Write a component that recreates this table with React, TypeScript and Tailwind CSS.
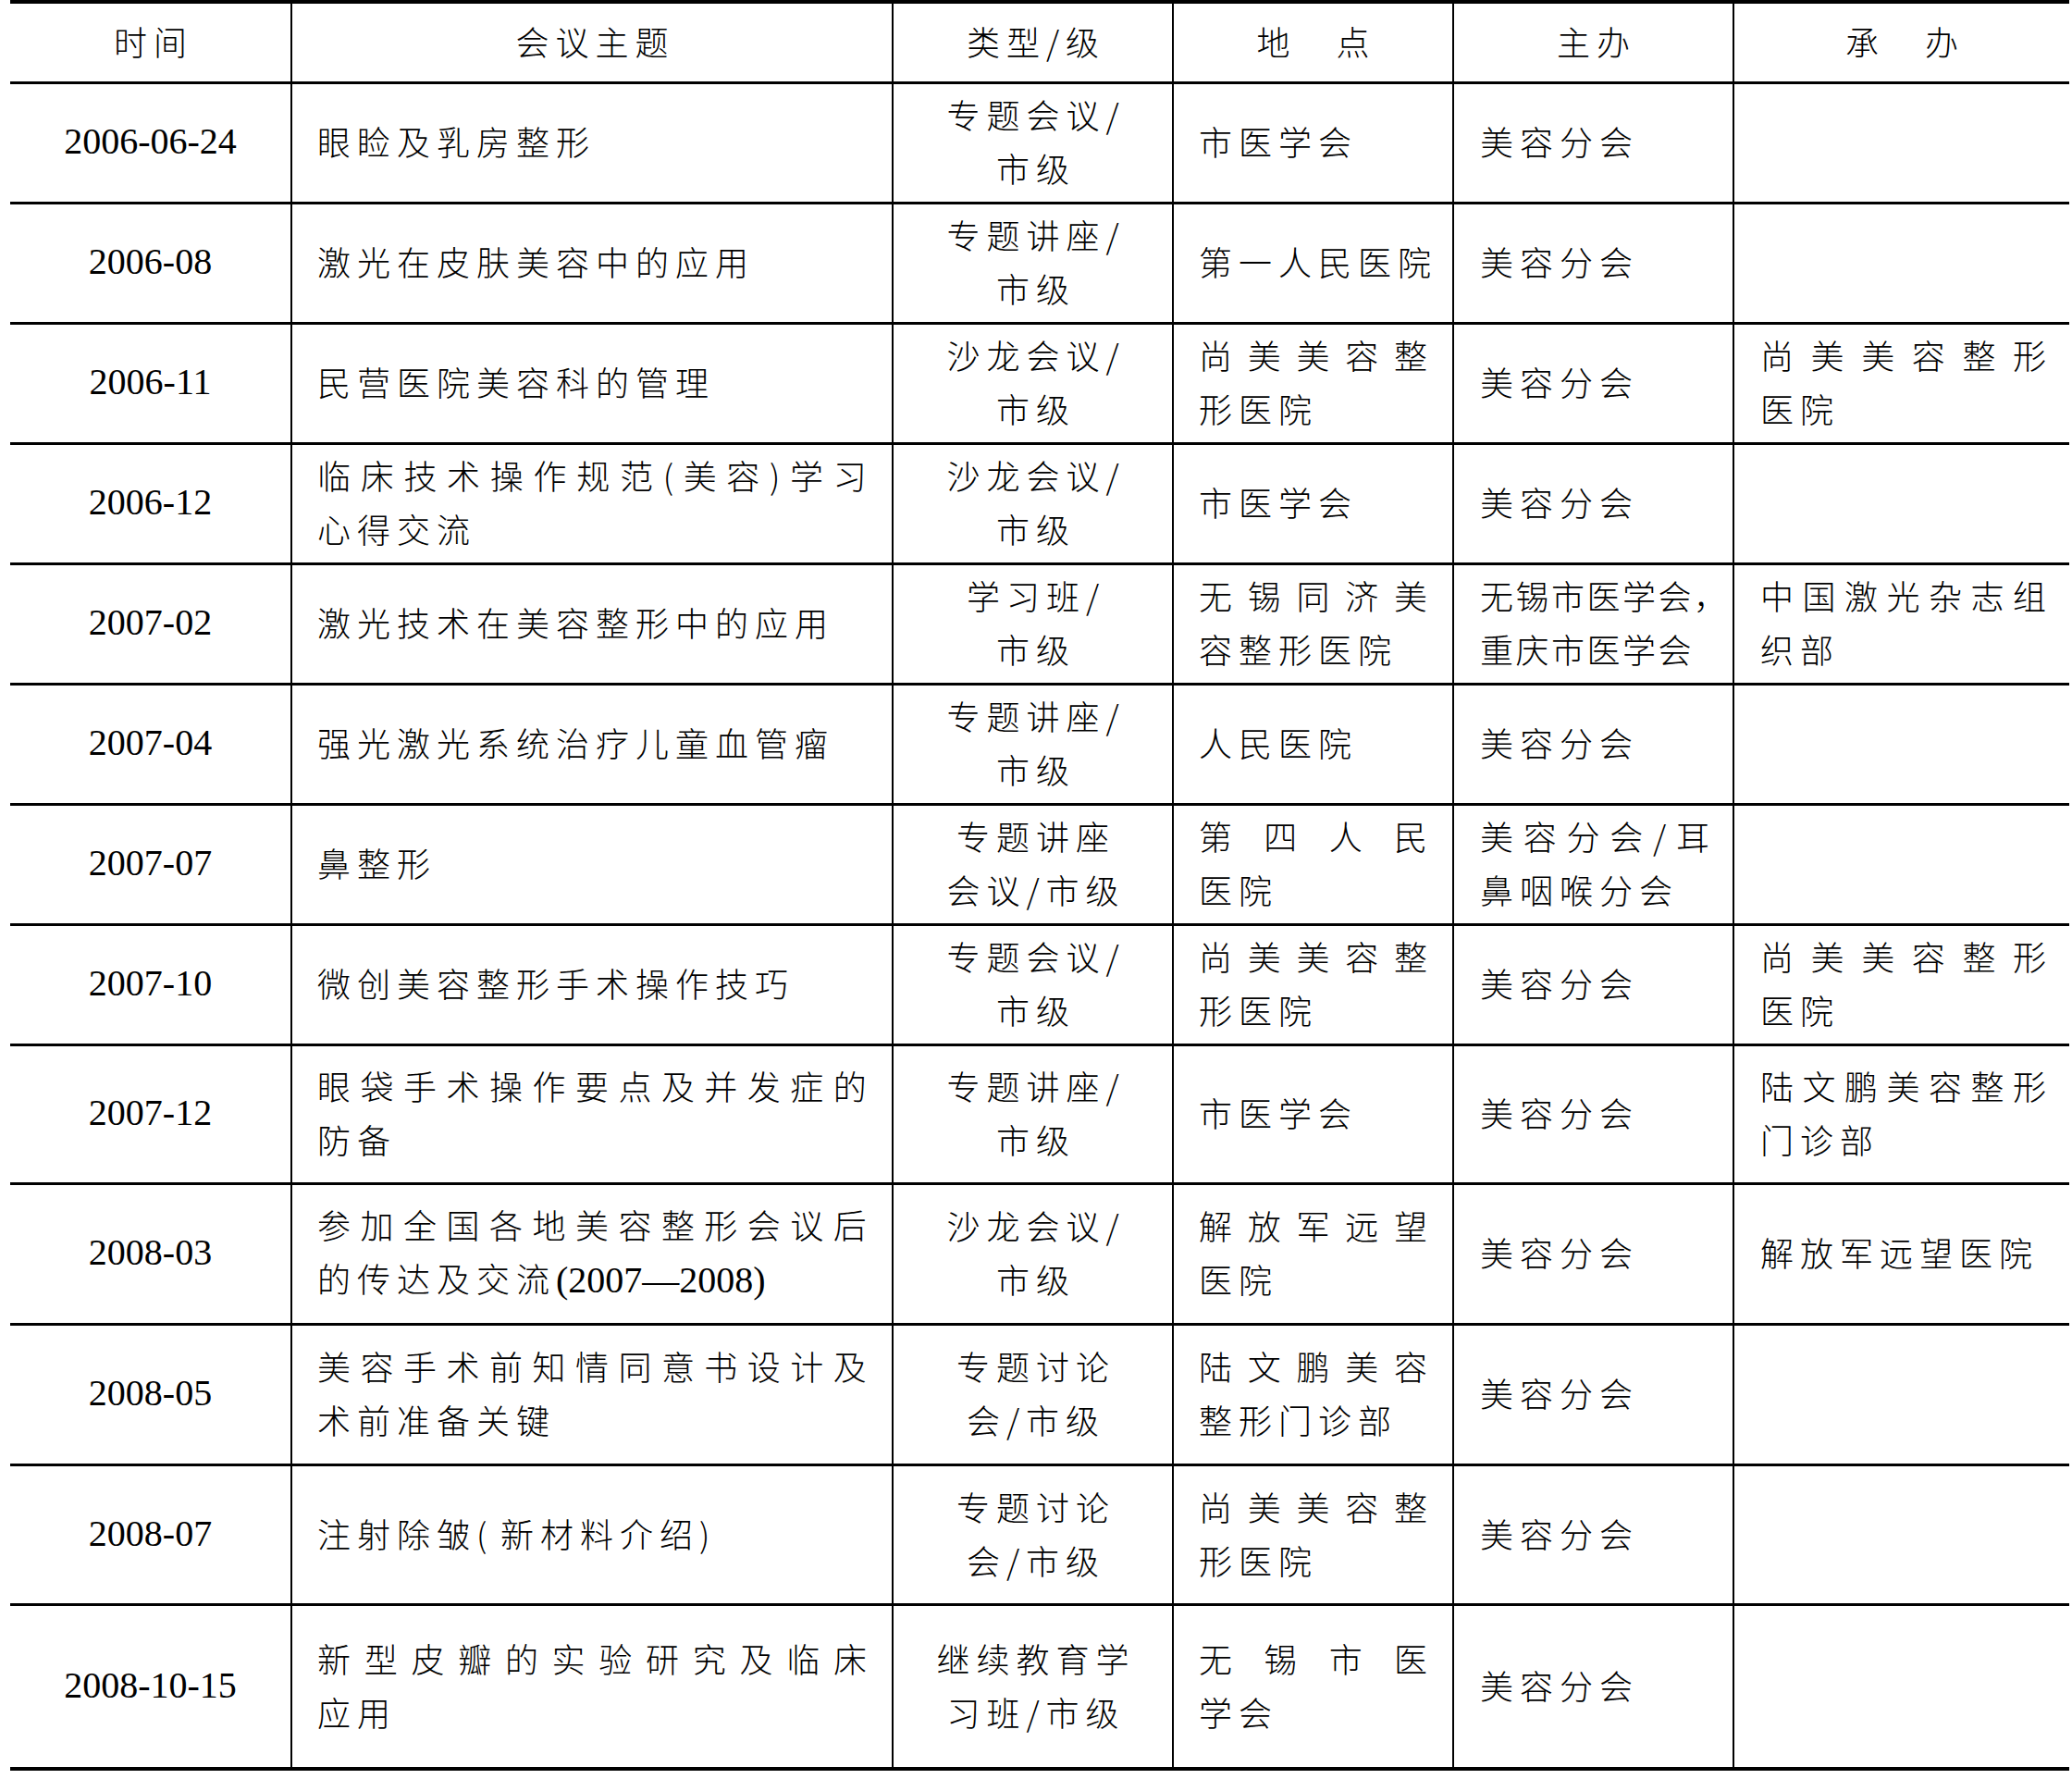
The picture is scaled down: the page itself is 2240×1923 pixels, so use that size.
import React from 'react';

type Line = React.ReactNode;

function Spread({ s }: { s: string }) {
  return (
    <div className="flex justify-between whitespace-nowrap">
      {Array.from(s).map((c, i) => (
        <span key={i}>{c}</span>
      ))}
    </div>
  );
}

const sp = (s: string) => <Spread s={s} />;

function Lines({ lines, center }: { lines: Line[]; center?: boolean }) {
  return (
    <div className={center ? 'w-full text-center' : 'w-full'}>
      {lines.map((l, i) =>
        typeof l === 'string' ? (
          <div key={i} className={center ? 'whitespace-nowrap tracking-[7px] pl-[7px]' : 'whitespace-nowrap tracking-[7px]'}>
            {l}
          </div>
        ) : (
          <div key={i}>{l}</div>
        )
      )}
    </div>
  );
}

type Row = {
  h: string;
  d: string;
  t: Line[];
  k: Line[];
  p: Line[];
  z: Line[];
  c: Line[];
};

const hostWuxi = (
  <div className="tracking-[2.5px]">
    <div className="whitespace-nowrap">无锡市医学会，</div>
    <div className="whitespace-nowrap">重庆市医学会</div>
  </div>
);

const exchange = (
  <div className="whitespace-nowrap tracking-[7px]">
    的传达及交流
    <span className="font-['Liberation_Serif',serif] text-[40px] tracking-normal">(2007—2008)</span>
  </div>
);

const injection = (
  <div className="whitespace-nowrap tracking-[7px]">
    注射除皱
    <span className="inline-block w-[26px] text-left tracking-normal">(</span>
    新材料介绍
    <span className="inline-block w-[40px] text-left tracking-normal">)</span>
  </div>
);

const rows: Row[] = [
  { h: 'h-[130px] border-b-[3px]', d: '2006-06-24', t: ['眼睑及乳房整形'], k: ['专题会议/', '市级'], p: ['市医学会'], z: ['美容分会'], c: [] },
  { h: 'h-[130px] border-b-[3px]', d: '2006-08', t: ['激光在皮肤美容中的应用'], k: ['专题讲座/', '市级'], p: ['第一人民医院'], z: ['美容分会'], c: [] },
  { h: 'h-[130px] border-b-[3px]', d: '2006-11', t: ['民营医院美容科的管理'], k: ['沙龙会议/', '市级'], p: [sp('尚美美容整'), '形医院'], z: ['美容分会'], c: [sp('尚美美容整形'), '医院'] },
  { h: 'h-[130px] border-b-[3px]', d: '2006-12', t: [sp('临床技术操作规范(美容)学习'), '心得交流'], k: ['沙龙会议/', '市级'], p: ['市医学会'], z: ['美容分会'], c: [] },
  { h: 'h-[130px] border-b-[3px]', d: '2007-02', t: ['激光技术在美容整形中的应用'], k: ['学习班/', '市级'], p: [sp('无锡同济美'), '容整形医院'], z: [hostWuxi], c: [sp('中国激光杂志组'), '织部'] },
  { h: 'h-[130px] border-b-[3px]', d: '2007-04', t: ['强光激光系统治疗儿童血管瘤'], k: ['专题讲座/', '市级'], p: ['人民医院'], z: ['美容分会'], c: [] },
  { h: 'h-[130px] border-b-[3px]', d: '2007-07', t: ['鼻整形'], k: ['专题讲座', '会议/市级'], p: [sp('第四人民'), '医院'], z: [sp('美容分会/耳'), '鼻咽喉分会'], c: [] },
  { h: 'h-[130px] border-b-[3px]', d: '2007-10', t: ['微创美容整形手术操作技巧'], k: ['专题会议/', '市级'], p: [sp('尚美美容整'), '形医院'], z: ['美容分会'], c: [sp('尚美美容整形'), '医院'] },
  { h: 'h-[150px] border-b-[3px]', d: '2007-12', t: [sp('眼袋手术操作要点及并发症的'), '防备'], k: ['专题讲座/', '市级'], p: ['市医学会'], z: ['美容分会'], c: [sp('陆文鹏美容整形'), '门诊部'] },
  { h: 'h-[152px] border-b-[3px]', d: '2008-03', t: [sp('参加全国各地美容整形会议后'), exchange], k: ['沙龙会议/', '市级'], p: [sp('解放军远望'), '医院'], z: ['美容分会'], c: ['解放军远望医院'] },
  { h: 'h-[152px] border-b-[3px]', d: '2008-05', t: [sp('美容手术前知情同意书设计及'), '术前准备关键'], k: ['专题讨论', '会/市级'], p: [sp('陆文鹏美容'), '整形门诊部'], z: ['美容分会'], c: [] },
  { h: 'h-[151px] border-b-[3px]', d: '2008-07', t: [injection], k: ['专题讨论', '会/市级'], p: [sp('尚美美容整'), '形医院'], z: ['美容分会'], c: [] },
  { h: 'h-[178px] border-b-4', d: '2008-10-15', t: [sp('新型皮瓣的实验研究及临床'), '应用'], k: ['继续教育学', '习班/市级'], p: [sp('无锡市医'), '学会'], z: ['美容分会'], c: [] },
];

const grid = 'grid grid-cols-[303px_650px_303px_303px_303px_364px] border-black';
const vcell = 'flex items-center border-l-2 border-black pb-[5px]';

export default function App() {
  return (
    <div className="w-[2240px] h-[1923px] bg-white pl-[11px] text-black font-['Noto_Sans_CJK_SC',sans-serif] font-light text-[36px] leading-[58px]">
      <div className="w-[2226px]">
        <div className={`${grid} h-[91px] border-t-4 border-b-[3px]`}>
          <div className="flex items-center justify-center pb-[5px]">
            <Lines center lines={['时间']} />
          </div>
          <div className={vcell}>
            <Lines center lines={['会议主题']} />
          </div>
          <div className={vcell}>
            <Lines center lines={['类型/级']} />
          </div>
          <div className={vcell}>
            <Lines center lines={['地　点']} />
          </div>
          <div className={vcell}>
            <Lines center lines={['主办']} />
          </div>
          <div className={vcell}>
            <Lines center lines={['承　办']} />
          </div>
        </div>
        {rows.map((r, i) => (
          <div key={i} className={`${grid} ${r.h}`}>
            <div className="flex items-center justify-center pb-[3px] font-['Liberation_Serif',serif] font-normal text-[40px] leading-[58px]">
              {r.d}
            </div>
            <div className={`${vcell} px-[27px]`}>
              <Lines lines={r.t} />
            </div>
            <div className={vcell}>
              <Lines center lines={r.k} />
            </div>
            <div className={`${vcell} pl-[27px] pr-[27px]`}>
              <Lines lines={r.p} />
            </div>
            <div className={`${vcell} pl-[28px] pr-[25px]`}>
              <Lines lines={r.z} />
            </div>
            <div className={`${vcell} pl-[28px] pr-[25px]`}>
              <Lines lines={r.c} />
            </div>
          </div>
        ))}
      </div>
    </div>
  );
}
